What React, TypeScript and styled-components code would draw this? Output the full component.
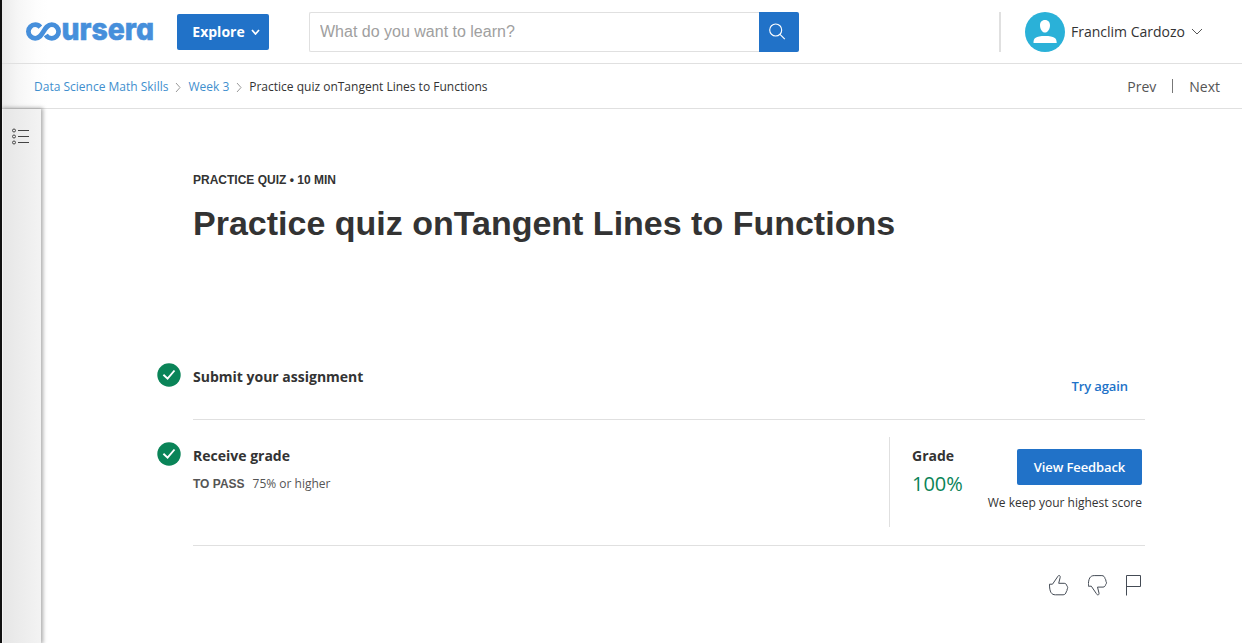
import React from "react";
import styled, { createGlobalStyle } from "styled-components";

const sans = `"Open Sans", "Noto Sans", sans-serif`;
const arial = `"Liberation Sans", Arial, sans-serif`;
const blue = "#2172c8";

const GlobalStyle = createGlobalStyle`
  *, *::before, *::after { box-sizing: border-box; }
  body { margin: 0; background: #fff; color: #333; font-family: ${sans}; }
  button { font-family: inherit; cursor: pointer; }
  svg { display: block; flex: none; }
`;

const Page = styled.div`
  display: flex;
  flex-direction: column;
  height: 643px;
  overflow: hidden;
  border-left: 2px solid #111;
  background: linear-gradient(90deg, #ebebeb 0, #f6f6f6 16px, #fdfdfd 34px, #fff 46px);
`;

const Header = styled.header`
  display: flex;
  align-items: center;
  height: 64px;
  padding-left: 24px;
  border-bottom: 1px solid #e0e0e0;
`;

const LogoMark = styled.svg`
  overflow: visible;
`;

const LogoText = styled.text`
  font-family: Inter, sans-serif;
  font-size: 30.5px;
  font-weight: 800;
  font-feature-settings: "cv11" 1;
  fill: #468fdb;
  stroke: #468fdb;
  stroke-width: 0.6px;
`;

const ExploreButton = styled.button`
  display: flex;
  align-items: center;
  justify-content: center;
  gap: 6px;
  width: 92px;
  height: 36px;
  margin-left: 23px;
  padding: 0 0 0 6px;
  border: 0;
  border-radius: 2px;
  background: ${blue};
  color: #fff;
  font-size: 14px;
  font-weight: 700;
`;

const Search = styled.form`
  display: flex;
  width: 490px;
  height: 40px;
  margin-left: 40px;
`;

const SearchInput = styled.input`
  flex: 1;
  min-width: 0;
  padding: 0 10px;
  border: 1px solid #e0e0e0;
  border-right: 0;
  border-radius: 2px 0 0 2px;
  outline: 0;
  background: #fff;
  font: 300 16px ${arial};
  &::placeholder { color: #a0a0a0; opacity: 1; }
`;

const SearchButton = styled.button`
  display: flex;
  align-items: center;
  justify-content: center;
  width: 40px;
  padding: 0 4px 0 0;
  border: 0;
  border-radius: 0 2px 2px 0;
  background: ${blue};
`;

const Account = styled.div`
  display: flex;
  align-items: center;
  height: 40px;
  margin-left: auto;
  margin-right: 39px;
  padding-left: 24px;
  border-left: 2px solid #e0e0e0;
  font-size: 14px;
`;

const AccountName = styled.span`
  width: 114px;
  margin: 0 6px;
  white-space: nowrap;
`;

const SubHeader = styled.nav`
  display: flex;
  align-items: center;
  justify-content: space-between;
  height: 45px;
  padding: 0 22px 0 32px;
  border-bottom: 1px solid #e0e0e0;
`;

const Trail = styled.div`
  display: flex;
  align-items: center;
  font-size: 12px;
  white-space: nowrap;
`;

const Crumb = styled.a<{ $current?: boolean }>`
  color: ${(p) => (p.$current ? "#333" : "#3f8fce")};
`;

const Pager = styled.div`
  display: flex;
  align-items: center;
  gap: 16px;
  color: #555;
  font-size: 14px;
`;

const PagerDivider = styled.span`
  width: 1px;
  height: 14px;
  background: #777;
`;

const Body = styled.div`
  display: flex;
  flex: 1;
  min-height: 0;
  background: #fff;
`;

const Rail = styled.aside`
  width: 39px;
  padding: 19px 0 0 9px;
  border-left: 1px solid #f4f4f4;
  background: linear-gradient(90deg, #e6e6e6, #f3f3f3);
  box-shadow: 1px 0 4px 1px rgba(0, 0, 0, 0.33);
`;

const Content = styled.main`
  width: 952px;
  margin-left: 152px;
  padding-top: 63px;
`;

const Kicker = styled.div`
  font: 700 12px/16px ${arial};
`;

const Title = styled.h1`
  margin: 14px 0 0;
  font: 700 34px/42px ${arial};
  white-space: nowrap;
`;

const Steps = styled.section`
  display: flex;
  flex-direction: column;
  margin-top: 115px;
`;

const Step = styled.div<{ $height: number }>`
  display: flex;
  height: ${(p) => p.$height}px;
  border-bottom: 1px solid #e0e0e0;
`;

const StepMark = styled.div<{ $top: number }>`
  width: 36px;
  margin-left: -36px;
  padding-top: ${(p) => p.$top}px;
`;

const StepText = styled.div<{ $top: number }>`
  flex: 1;
  padding-top: ${(p) => p.$top}px;
`;

const Heading = styled.h2`
  margin: 0;
  font-size: 14px;
  font-weight: 700;
  line-height: 20px;
  white-space: nowrap;
`;

const Requirement = styled.p`
  display: flex;
  gap: 8px;
  margin: 9px 0 0;
  color: #555;
  font-size: 12px;
  line-height: 18px;
  b { font-family: ${arial}; }
`;

const TryAgain = styled.a`
  padding: 18px 17px 0 0;
  color: ${blue};
  font-size: 13px;
  font-weight: 600;
  line-height: 18px;
  letter-spacing: -0.1px;
`;

const GradePanel = styled.div`
  display: flex;
  justify-content: space-between;
  width: 256px;
  height: 90px;
  margin-top: 17px;
  padding: 9px 3px 0 22px;
  border-left: 1px solid #e0e0e0;
`;

const Grade = styled.div`
  color: #0a8458;
  font-size: 20px;
  line-height: 28px;
  margin-top: 4px;
`;

const Feedback = styled.div`
  display: flex;
  flex-direction: column;
  align-items: flex-end;
  gap: 9px;
  padding-top: 3px;
  font-size: 12px;
  line-height: 18px;
  white-space: nowrap;
`;

const FeedbackButton = styled.button`
  width: 125px;
  height: 36px;
  padding: 0;
  border: 0;
  border-radius: 2px;
  background: ${blue};
  color: #fff;
  font-size: 13px;
  font-weight: 600;
  letter-spacing: -0.1px;
`;

const Reactions = styled.div`
  display: flex;
  justify-content: flex-end;
  gap: 18px;
  margin-top: 28px;
  padding-right: 3px;
`;

const Logo = () => (
  <LogoMark width="128" height="22" viewBox="0 0 128 22" role="img" aria-label="coursera">
    <path
      d="M14.400 6.100C13 4.500 11.300 3.700 9.200 3.700a6.800 6.800 0 0 0 0 13.600C17.500 17.300 17.500 3.700 25.800 3.700a6.800 6.800 0 0 1 0 13.600c-2.600 0-4.600-1.200-6-3.300"
      fill="none"
      stroke="#468fdb"
      strokeWidth="4.800"
    />
    <LogoText x="35.500" y="18.900" textLength="92.500" lengthAdjust="spacingAndGlyphs">
      ursera
    </LogoText>
  </LogoMark>
);

const Chevron = ({ w, h, stroke, thick }: { w: number; h: number; stroke: string; thick: number }) => (
  <svg width={w} height={h} fill="none" stroke={stroke} strokeWidth={thick}>
    <path d={`M1 1L${w / 2} ${h - 1}L${w - 1} 1`} />
  </svg>
);

const Separator = () => (
  <svg width="20" height="11" fill="none" stroke="#999">
    <path d="M8 2L12 6.500L8 11" />
  </svg>
);

const Check = () => (
  <svg width="24" height="24">
    <circle cx="12" cy="12" r="11.7" fill="#0a8458" />
    <path d="M6.400 11.700L10.600 15.700L17.500 7.500" fill="none" stroke="#fff" strokeWidth="1.9" />
  </svg>
);

const thumb =
  "M.8 9.500h3L8.800 2.200C9.600.2 11.800.3 11.500 2.600L10 8.600h5.500c1.500 0 2.500 1.200 2.700 2.600 1 1 1 2.200.3 3.100 0 1.200-.3 2.100-1 2.900-.2 1.600-1.400 2.900-3.100 2.900H6.700C2.800 20.100.8 17.500.8 9.500Z";

export default function App() {
  return (
    <>
      <GlobalStyle />
      <Page>
        <Header>
          <Logo />
          <ExploreButton>
            Explore
            <Chevron w={9} h={6} stroke="#fff" thick={1.7} />
          </ExploreButton>
          <Search>
            <SearchInput placeholder="What do you want to learn?" />
            <SearchButton type="button" aria-label="Search">
              <svg width="17" height="17" fill="none" stroke="#fff" strokeWidth="1.1">
                <circle cx="6.700" cy="7" r="6" />
                <path d="M11 11.400L15.800 16.200" />
              </svg>
            </SearchButton>
          </Search>
          <Account>
            <svg width="40" height="40">
              <circle cx="20" cy="20" r="20" fill="#2ab1d8" />
              <path
                d="M20 8c3.300 0 5 2.300 5 5.300 0 3.900-2.200 7.300-5 7.300s-5-3.400-5-7.300C15 10.300 16.700 8 20 8ZM8.500 31c0-5 2-7 11.500-7s11.700 2 11.700 7Z"
                fill="#fff"
              />
            </svg>
            <AccountName>Franclim Cardozo</AccountName>
            <Chevron w={12} h={7} stroke="#555" thick={1} />
          </Account>
        </Header>
        <SubHeader>
          <Trail>
            <Crumb>Data Science Math Skills</Crumb>
            <Separator />
            <Crumb>Week 3</Crumb>
            <Separator />
            <Crumb $current>Practice quiz onTangent Lines to Functions</Crumb>
          </Trail>
          <Pager>
            <span>Prev</span>
            <PagerDivider />
            <span>Next</span>
          </Pager>
        </SubHeader>
        <Body>
          <Rail>
            <svg width="19" height="18" fill="none" stroke="#444">
              <circle cx="2" cy="2.500" r="1.500" />
              <circle cx="2" cy="8.500" r="1.500" />
              <circle cx="2" cy="14.500" r="1.500" />
              <path d="M6 2.500H17M6 8.500H17M6 14.500H17" />
            </svg>
          </Rail>
          <Content>
            <Kicker>PRACTICE QUIZ • 10 MIN</Kicker>
            <Title>Practice quiz onTangent Lines to Functions</Title>
            <Steps>
              <Step $height={61}>
                <StepMark $top={4}>
                  <Check />
                </StepMark>
                <StepText $top={8}>
                  <Heading>Submit your assignment</Heading>
                </StepText>
                <TryAgain>Try again</TryAgain>
              </Step>
              <Step $height={126}>
                <StepMark $top={22}>
                  <Check />
                </StepMark>
                <StepText $top={26}>
                  <Heading>Receive grade</Heading>
                  <Requirement>
                    <b>TO PASS</b>
                    <span>75% or higher</span>
                  </Requirement>
                </StepText>
                <GradePanel>
                  <div>
                    <Heading>Grade</Heading>
                    <Grade>100%</Grade>
                  </div>
                  <Feedback>
                    <FeedbackButton>View Feedback</FeedbackButton>
                    <span>We keep your highest score</span>
                  </Feedback>
                </GradePanel>
              </Step>
            </Steps>
            <Reactions>
              <svg width="21" height="22" fill="none" stroke="#444b55">
                <path d={thumb} transform="translate(-.3 .7)" />
              </svg>
              <svg width="20" height="22" fill="none" stroke="#444b55">
                <path d={thumb} transform="translate(-.5 21.700) scale(1 -1)" />
              </svg>
              <svg width="16" height="22" fill="none" stroke="#444b55">
                <path d="M.5 21.500V1.500H14.500V12.500H.5" />
              </svg>
            </Reactions>
          </Content>
        </Body>
      </Page>
    </>
  );
}
